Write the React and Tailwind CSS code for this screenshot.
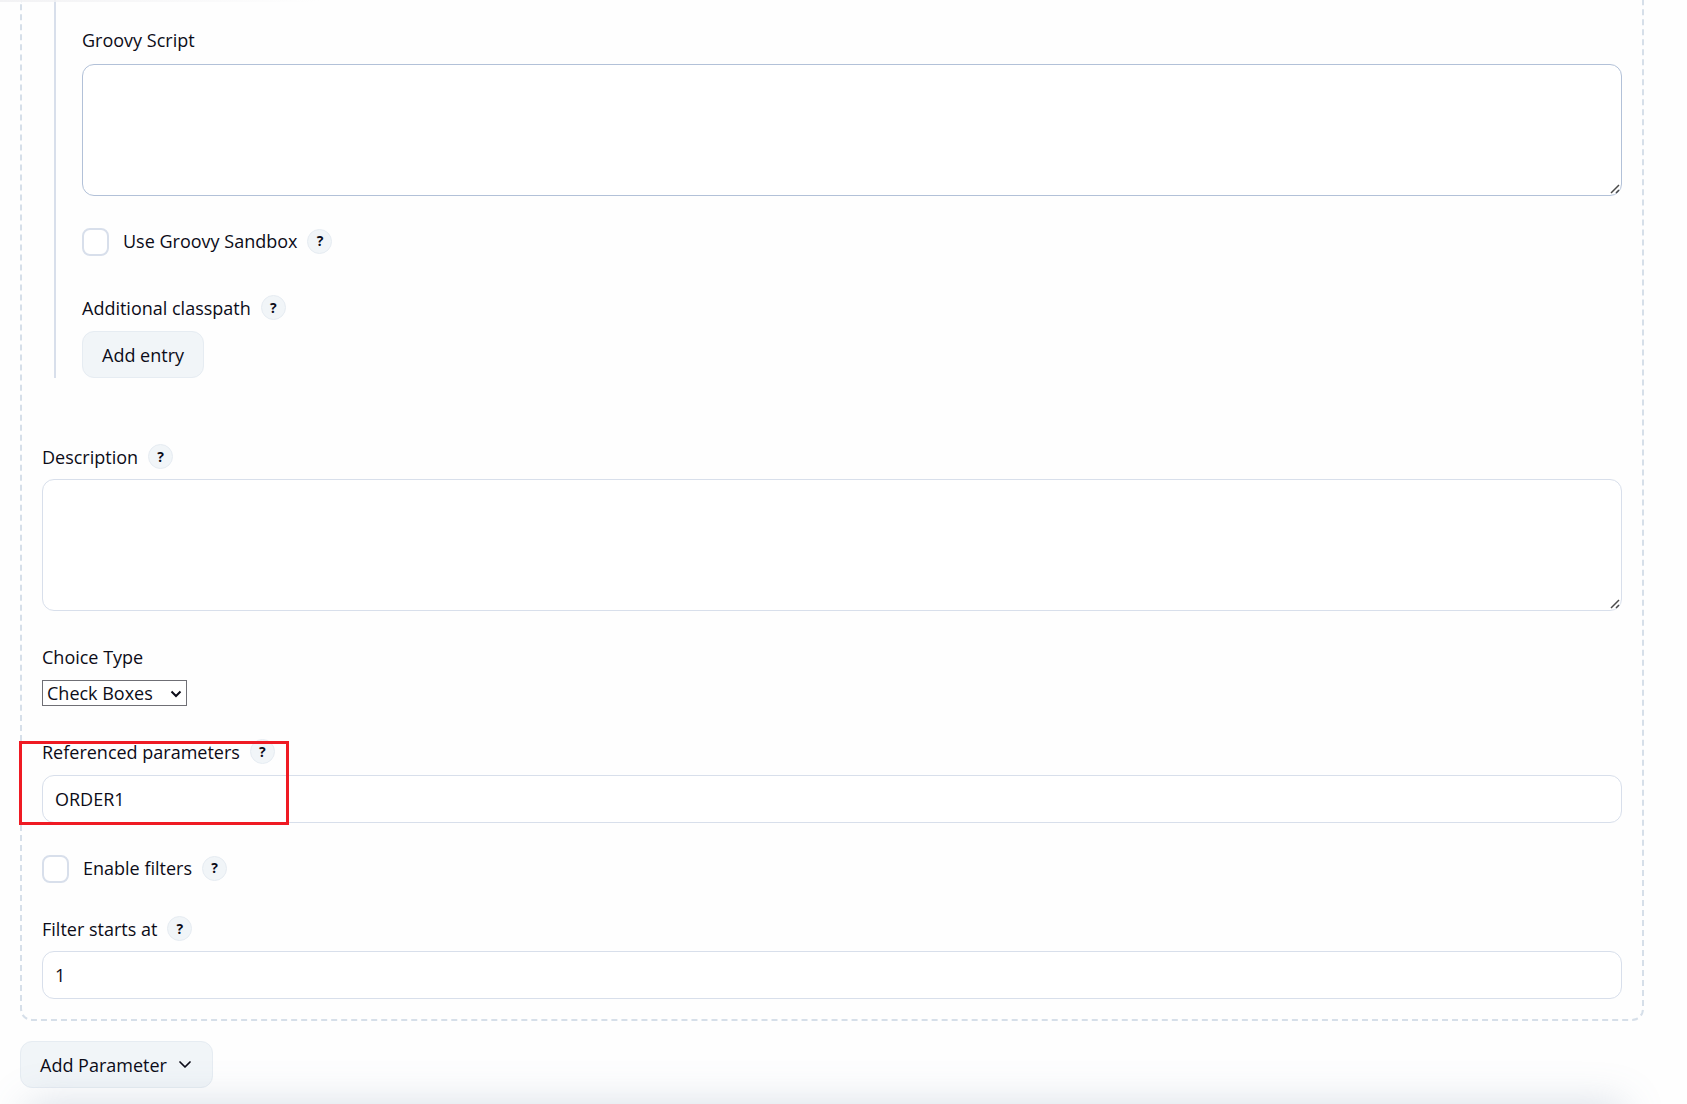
import { useId } from "react";

function Help({ topic }) {
  return (
    <button
      type="button"
      aria-label={`Help for ${topic}`}
      className="flex size-[25px] shrink-0 items-center justify-center rounded-full border border-[#e6ecf2] bg-[#f1f5f8] text-sm font-bold leading-none"
    >
      ?
    </button>
  );
}

function FieldLabel({ htmlFor, children, help }) {
  return (
    <div className="flex h-[25px] items-center gap-2.5">
      <label htmlFor={htmlFor}>{children}</label>
      {help && <Help topic={children} />}
    </div>
  );
}

function TextArea({ id, className }) {
  return (
    <div className="relative">
      <textarea
        id={id}
        className={`block h-[132px] w-full resize-none rounded-xl border bg-white px-3 py-2 outline-none ${className}`}
      />
      <svg viewBox="0 0 10 10" className="pointer-events-none absolute right-[2px] bottom-[2px] size-2.5" aria-hidden="true">
        <path d="M1 9 9 1M6 9l3-3" stroke="#4a4a4a" strokeWidth="1.5" fill="none" />
      </svg>
    </div>
  );
}

function TextInput({ id, value }) {
  return (
    <input
      id={id}
      type="text"
      defaultValue={value}
      className="block h-12 w-full rounded-xl border border-[#d8dfeb] bg-white px-3 outline-none"
    />
  );
}

function CheckField({ children }) {
  const id = useId();
  return (
    <div className="flex h-7 items-center">
      <input
        id={id}
        type="checkbox"
        className="mr-3.5 h-7 w-[27px] shrink-0 appearance-none rounded-lg border-2 border-[#d8dfeb] bg-white"
      />
      <div className="flex h-7 items-center gap-2.5 pb-0.5">
        <label htmlFor={id}>{children}</label>
        <Help topic={children} />
      </div>
    </div>
  );
}

export default function App() {
  return (
    <div className="relative h-screen overflow-hidden bg-[#fefefe] pr-[43px] pl-5 font-['Open_Sans','Noto_Sans',sans-serif] text-lg leading-6 text-[#0c0c18]">
      <div className="absolute top-0 left-0 z-10 h-0.5 w-80 bg-linear-to-r from-[#f2f2f4] to-transparent" />
      <main>
        <section className="rounded-b-xl border-2 border-t-0 border-dashed border-[#d6dfe9] px-5 pb-5">
          <div className="ml-3 border-l-2 border-[#d8dfeb] pt-[27px] pl-[26px]">
            <div className="flex flex-col gap-3">
              <FieldLabel htmlFor="groovy">Groovy Script</FieldLabel>
              <TextArea id="groovy" className="border-[#b2c1d8]" />
            </div>
            <div className="mt-8">
              <CheckField>Use Groovy Sandbox</CheckField>
            </div>
            <div className="mt-[39px] flex flex-col items-start gap-[11px]">
              <FieldLabel htmlFor="classpath" help>Additional classpath</FieldLabel>
              <button id="classpath" type="button" className="h-[47px] rounded-xl border border-[#e6ecf2] bg-[#f1f5f8] px-[19px]">
                Add entry
              </button>
            </div>
          </div>

          <div className="mt-[66px] flex flex-col gap-2.5">
            <FieldLabel htmlFor="description" help>Description</FieldLabel>
            <TextArea id="description" className="border-[#d8dfeb]" />
          </div>

          <div className="mt-[33px] flex flex-col items-start gap-[11px]">
            <FieldLabel htmlFor="choice">Choice Type</FieldLabel>
            <div className="relative">
              <select id="choice" className="block h-[26px] w-[145px] appearance-none border border-[#6f6f75] bg-white pr-6 pl-1 leading-6">
                <option>Check Boxes</option>
              </select>
              <svg viewBox="0 0 12 8" className="pointer-events-none absolute top-[10px] right-[5px] h-2 w-3" aria-hidden="true">
                <path d="m1.5 1.5 4.5 4.5 4.5-4.5" stroke="#0c0c18" strokeWidth="2" fill="none" />
              </svg>
            </div>
          </div>

          <div className="relative mt-[33px] flex flex-col gap-[11px]">
            <FieldLabel htmlFor="referenced" help>Referenced parameters</FieldLabel>
            <TextInput id="referenced" value="ORDER1" />
            <div className="pointer-events-none absolute top-[2px] -left-[23px] h-[84px] w-[270px] border-[3px] border-[#ef1a23]" />
          </div>

          <div className="mt-8">
            <CheckField>Enable filters</CheckField>
          </div>

          <div className="mt-[33px] flex flex-col gap-2.5">
            <FieldLabel htmlFor="filter" help>Filter starts at</FieldLabel>
            <TextInput id="filter" value="1" />
          </div>
        </section>

        <button type="button" className="mt-5 flex h-[47px] items-center gap-3 rounded-xl border border-[#e6ecf2] bg-[#f1f5f8] pr-[21px] pl-[19px]">
          Add Parameter
          <svg viewBox="0 0 12 8" className="h-2 w-3" aria-hidden="true">
            <path d="m1 1 5 5 5-5" stroke="#0c0c18" strokeWidth="1.7" strokeLinecap="round" strokeLinejoin="round" fill="none" />
          </svg>
        </button>
      </main>
      <div className="pointer-events-none absolute right-16 -bottom-20 left-7 h-20 shadow-[0_0_40px_rgba(110,130,165,0.26)]" />
    </div>
  );
}
